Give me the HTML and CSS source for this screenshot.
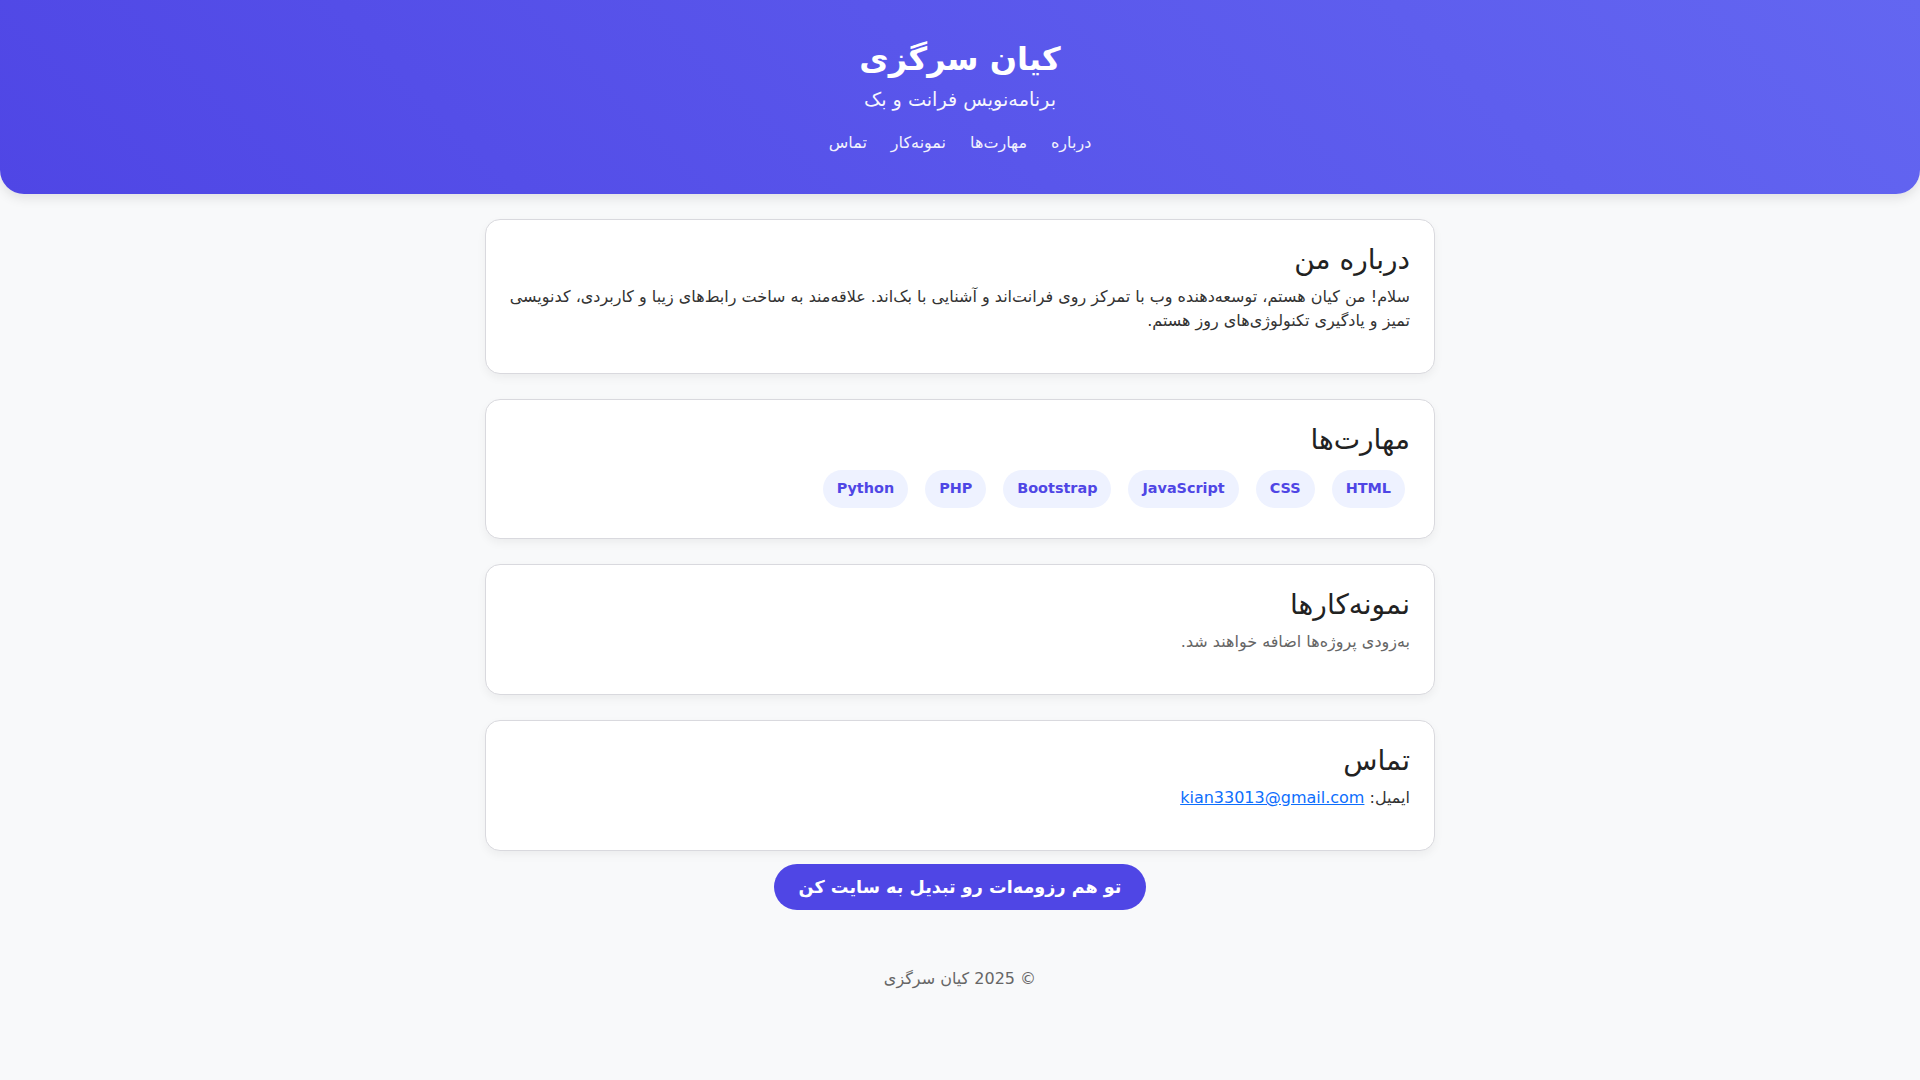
FILE: index.html
```html
<!DOCTYPE html>
<html lang="fa" dir="rtl">
<head>
<meta charset="utf-8">
<title>کیان سرگزی</title>
<link rel="stylesheet" href="styles.css">
</head>
<body>
<header class="hero">
  <h1 class="hero-title">کیان سرگزی</h1>
  <p class="hero-sub">برنامه‌نویس فرانت و بک</p>
  <nav class="hero-nav">
    <a href="#about">درباره</a>
    <a href="#skills">مهارت‌ها</a>
    <a href="#work">نمونه‌کار</a>
    <a href="#contact">تماس</a>
  </nav>
</header>
<main class="content">
  <section class="card" id="about">
    <h2 class="card-title">درباره من</h2>
    <p class="card-text">سلام! من کیان هستم، توسعه‌دهنده وب با تمرکز روی فرانت‌اند و آشنایی با بک‌اند. علاقه‌مند به ساخت رابط‌های زیبا و کاربردی، کدنویسی تمیز و یادگیری تکنولوژی‌های روز هستم.</p>
  </section>
  <section class="card" id="skills">
    <h2 class="card-title">مهارت‌ها</h2>
    <div class="chips">
      <span class="chip">HTML</span>
      <span class="chip">CSS</span>
      <span class="chip">JavaScript</span>
      <span class="chip">Bootstrap</span>
      <span class="chip">PHP</span>
      <span class="chip">Python</span>
    </div>
  </section>
  <section class="card" id="work">
    <h2 class="card-title">نمونه‌کارها</h2>
    <p class="card-text muted">به‌زودی پروژه‌ها اضافه خواهند شد.</p>
  </section>
  <section class="card" id="contact">
    <h2 class="card-title">تماس</h2>
    <p class="card-text">ایمیل: <a class="mail" href="mailto:kian33013@gmail.com">kian33013@gmail.com</a></p>
  </section>
</main>
<div class="cta-wrap">
  <a class="cta" href="#">تو هم رزومه‌ات رو تبدیل به سایت کن</a>
</div>
<footer class="foot">© 2025 کیان سرگزی</footer>
</body>
</html>
```

FILE: styles.css
```css
* { box-sizing: border-box; }
html, body { margin: 0; padding: 0; }
body {
  font-family: "DejaVu Sans", "Noto Sans", sans-serif;
  font-size: 16px;
  line-height: 1.5;
  background: #f8f9fa;
  color: #333;
}
.hero {
  background: linear-gradient(45deg, #4f46e5, #6366f1);
  color: #fff;
  text-align: center;
  padding: 40px 20px 39px;
  border-radius: 0 0 24px 24px;
  box-shadow: 0 4px 12px rgba(0, 0, 0, 0.1);
}
.hero-title {
  margin: 0;
  font-size: 32px;
  line-height: 1.2;
  font-weight: bold;
}
.hero-sub {
  margin: 8px 0 0;
  font-size: 19.2px;
  line-height: 1.5;
  opacity: 0.95;
}
.hero-nav {
  margin-top: 16px;
  display: flex;
  justify-content: center;
  gap: 24px;
}
.hero-nav a {
  color: #fff;
  text-decoration: none;
  font-size: 16px;
  line-height: 24px;
  opacity: 0.92;
}
.content {
  width: 950px;
  margin: 25px auto 0;
  display: flex;
  flex-direction: column;
  gap: 25px;
}
.card {
  background: #fff;
  border: 1px solid #d9d9de;
  border-radius: 15px;
  padding: 24px 24px 24px 20px;
  box-shadow: 0 4px 10px rgba(0, 0, 0, 0.05);
}
.card-title {
  margin: 0 0 10px;
  font-size: 28px;
  line-height: 31px;
  font-weight: normal;
  color: #222;
}
.card-text {
  margin: 0 0 16px;
  font-size: 16px;
  line-height: 24px;
  color: #333;
}
.card-text.muted { color: #666; }
.mail { color: #0d6efd; }
.chips {
  display: flex;
  flex-wrap: wrap;
  column-gap: 7px;
  padding-bottom: 1px;
}
.chip {
  margin: 5px;
  padding: 8px 14px;
  border-radius: 20px;
  background: #eef2ff;
  color: #4f46e5;
  font-weight: bold;
  font-size: 14.4px;
  line-height: 21.6px;
}
.cta-wrap {
  text-align: center;
  margin-top: 13px;
}
.cta {
  display: inline-block;
  background: #4f46e5;
  color: #fff;
  font-weight: bold;
  font-size: 17.6px;
  line-height: 24px;
  padding: 11px 25px;
  border-radius: 30px;
  text-decoration: none;
}
.foot {
  text-align: center;
  color: #666;
  font-size: 16px;
  margin-top: 57px;
  padding-bottom: 40px;
}
```
